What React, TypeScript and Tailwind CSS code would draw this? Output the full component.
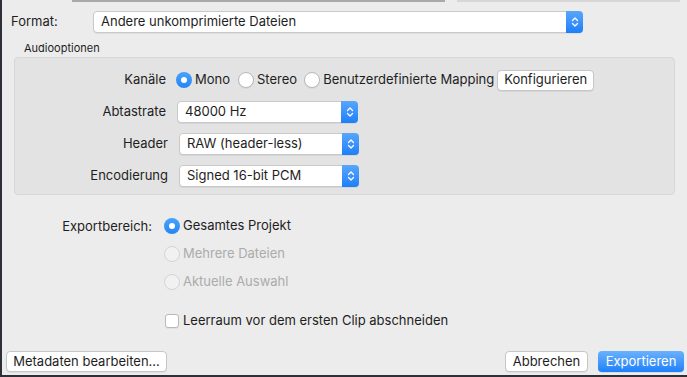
import React from "react";

const font = { fontFamily: "Inter, 'Liberation Sans', sans-serif" };

function Stepper() {
  return (
    <div className="w-[17px] self-stretch -my-px -mr-px rounded-r-[4px] bg-gradient-to-b from-[#58a6fb] to-[#1b7ff9] flex items-center justify-center">
      <svg width="8" height="12" viewBox="0 0 8 12" fill="none" stroke="white" strokeWidth="1.3" strokeLinecap="round" strokeLinejoin="round">
        <path d="M1.5 4.5 L4 2 L6.5 4.5" />
        <path d="M1.5 7.5 L4 10 L6.5 7.5" />
      </svg>
    </div>
  );
}

function Select({ value, className }: { value: string; className: string }) {
  return (
    <div
      className={
        "h-[22px] flex items-center bg-white border border-[#c9c9c9] rounded-[4px] shadow-[0_1px_0_rgba(0,0,0,0.06)] " + className
      }
    >
      <span className="flex-1 pl-[7px] text-[#1e1e1e]">{value}</span>
      <Stepper />
    </div>
  );
}

function Radio({ checked, disabled, className = "" }: { checked?: boolean; disabled?: boolean; className?: string }) {
  if (checked) {
    return (
      <span
        className={
          "w-[16px] h-[16px] rounded-full bg-gradient-to-b from-[#4aa2fb] to-[#2485f9] flex items-center justify-center shrink-0 " +
          className
        }
      >
        <span className="w-[6px] h-[6px] rounded-full bg-white" />
      </span>
    );
  }
  return (
    <span
      className={
        (disabled
          ? "block w-[16px] h-[16px] rounded-full bg-[#f1f1f1] border border-[#d4d4d4] shrink-0 "
          : "block w-[16px] h-[16px] rounded-full bg-white border border-[#b8b8b8] shadow-[0_1px_0_rgba(0,0,0,0.05)] shrink-0 ") + className
      }
    />
  );
}

function Button({ children, className }: { children: React.ReactNode; className: string }) {
  return (
    <div
      className={
        "h-[21px] flex items-center justify-center bg-white border border-[#c6c6c6] rounded-[4px] shadow-[0_1px_0_rgba(0,0,0,0.06)] text-[#1e1e1e] " +
        className
      }
    >
      {children}
    </div>
  );
}

export default function App() {
  return (
    <div
      className="w-[687px] h-[377px] bg-[#ececec] border-l-2 border-b-2 border-[#2f2f3a] flex flex-col text-[13px] text-[#1e1e1e] overflow-hidden"
      style={font}
    >
      <div className="flex h-[2px] shrink-0">
        <div className="ml-[70px] w-[373px] bg-[#a9a9a9]" />
        <div className="ml-[12px] w-[223px] bg-[#d6d6d6]" />
      </div>

      <div className="flex items-center mt-[9px] pl-[9px]">
        <span className="w-[82px]">Format:</span>
        <Select value="Andere unkomprimierte Dateien" className="w-[490px]" />
      </div>

      <div className="mt-[8px] pl-[22px] text-[11px] leading-[14px]">Audiooptionen</div>

      <div className="ml-[12px] mt-[2px] w-[661px] h-[138px] bg-[#e3e3e3] border border-[#d7d7d7] rounded-[4px] pt-[11px] flex flex-col gap-[10px]">
        <div className="flex items-center h-[22px]">
          <span className="w-[151px] text-right">Kanäle</span>
          <div className="ml-[10px] flex items-center">
            <Radio checked />
            <span className="ml-[3px]">Mono</span>
            <Radio className="ml-[8px]" />
            <span className="ml-[3px]">Stereo</span>
            <Radio className="ml-[7px]" />
            <span className="ml-[3px]">Benutzerdefinierte Mapping</span>
            <Button className="ml-[3px] w-[97px]">Konfigurieren</Button>
          </div>
        </div>
        <div className="flex items-center h-[22px]">
          <span className="w-[151px] text-right">Abtastrate</span>
          <Select value="48000 Hz" className="ml-[11px] w-[181px]" />
        </div>
        <div className="flex items-center h-[22px]">
          <span className="w-[153px] text-right">Header</span>
          <Select value="RAW (header-less)" className="ml-[11px] w-[180px]" />
        </div>
        <div className="flex items-center h-[22px]">
          <span className="w-[153px] text-right">Encodierung</span>
          <Select value="Signed 16-bit PCM" className="ml-[11px] w-[180px]" />
        </div>
      </div>

      <div className="mt-[21px] flex">
        <span className="w-[150px] text-right h-[20px] leading-[20px]">Exportbereich:</span>
        <div className="ml-[12px] flex flex-col gap-[8px]">
          <div className="flex items-center h-[20px]">
            <Radio checked />
            <span className="ml-[3px]">Gesamtes Projekt</span>
          </div>
          <div className="flex items-center h-[20px] text-[#ababab]">
            <Radio disabled />
            <span className="ml-[3px]">Mehrere Dateien</span>
          </div>
          <div className="flex items-center h-[20px] text-[#ababab]">
            <Radio disabled />
            <span className="ml-[3px]">Aktuelle Auswahl</span>
          </div>
          <div className="flex items-center h-[20px] mt-[11px]">
            <span className="w-[14px] h-[14px] ml-[1px] rounded-[3px] bg-white border border-[#b8b8b8] shadow-[0_1px_0_rgba(0,0,0,0.05)]" />
            <span className="ml-[4px]">Leerraum vor dem ersten Clip abschneiden</span>
          </div>
        </div>
      </div>

      <div className="mt-[20px] flex items-center pl-[4px] pr-[2px]">
        <Button className="w-[161px]">Metadaten bearbeiten...</Button>
        <Button className="ml-auto w-[83px]">Abbrechen</Button>
        <div className="ml-[10px] mr-[1px] w-[86px] h-[21px] flex items-center justify-center rounded-[4px] bg-gradient-to-b from-[#69b1fb] to-[#1c80fa] text-white shadow-[0_1px_0_rgba(0,0,0,0.08)]">
          Exportieren
        </div>
      </div>
    </div>
  );
}
